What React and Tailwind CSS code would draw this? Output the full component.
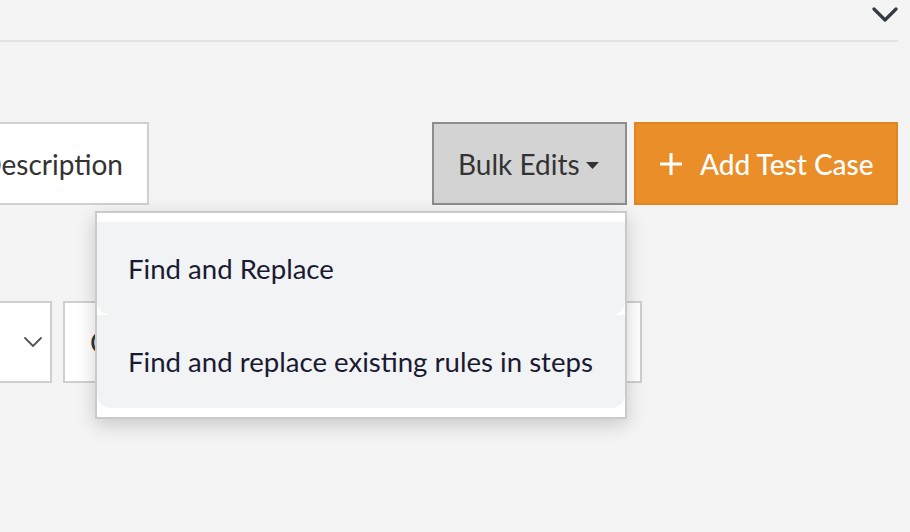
import React from "react";

export default function App() {
  return (
    <div className="relative w-[910px] h-[532px] overflow-hidden bg-[#f4f4f4] font-['Lato','Noto_Sans',sans-serif]">
      {/* top bar */}
      <div className="h-[42px] mr-[12px] border-b-2 border-[#e3e3e3] flex justify-end items-start pt-[7px]">
        <svg width="26" height="16" viewBox="0 0 26 16">
          <path d="M2 2 L13 13 L24 2" fill="none" stroke="#343b40" strokeWidth="3.2" strokeLinecap="round" strokeLinejoin="round" />
        </svg>
      </div>

      {/* action row */}
      <div className="mt-[80px] flex items-center mr-[12px] h-[83px]">
        <div className="-ml-[51px] w-[200px] h-[83px] bg-white border-2 border-[#d0d0d0] flex items-center justify-end pr-[24px] text-[28px] text-[#333] whitespace-nowrap overflow-hidden">
          Description
        </div>
        <div className="flex-1" />
        <button className="w-[195px] h-[83px] bg-[#d3d3d3] border-2 border-[#8d8d8d] flex items-center pl-[24px] text-[28px] text-[#333] whitespace-nowrap">
          Bulk Edits
          <svg width="13" height="7" viewBox="0 0 13 7" className="ml-[6px] mt-[4px]">
            <path d="M0 0 L13 0 L6.5 7 Z" fill="#333" />
          </svg>
        </button>
        <button className="ml-[7px] w-[264px] h-[83px] bg-[#e98e28] border-2 border-[#e0861c] flex items-center pl-[24px] text-[28px] text-white font-medium whitespace-nowrap">
          <svg width="22" height="22" viewBox="0 0 22 22" className="mr-[18px]">
            <path d="M11 0 V22 M0 11 H22" stroke="white" strokeWidth="3" />
          </svg>
          Add Test Case
        </button>
      </div>

      {/* filter row */}
      <div className="mt-[96px] flex items-center h-[82px]">
        <div className="-ml-[40px] w-[92px] h-[82px] bg-white border-2 border-[#cfcfcf] flex items-center justify-end pr-[8px]">
          <svg width="18" height="10" viewBox="0 0 18 10">
            <path d="M1 1 L9 9 L17 1" fill="none" stroke="#555" strokeWidth="1.8" strokeLinecap="round" strokeLinejoin="round" />
          </svg>
        </div>
        <div className="ml-[11px] w-[579px] h-[82px] bg-white border-2 border-[#cfcfcf] flex items-center pl-[25px] text-[28px] text-[#333]">
          Contains
        </div>
      </div>

      {/* dropdown menu */}
      <div className="absolute left-[95px] top-[211px] w-[532px] h-[208px] bg-white border-2 border-[#cacaca] py-[9px] shadow-[0_6px_18px_rgba(0,0,0,0.18)]">
        <div className="h-[93px] bg-[#f2f3f5] rounded-b-[14px] flex items-center pl-[31px] text-[27.6px] text-[#1a1a33] whitespace-nowrap">
          Find and Replace
        </div>
        <div className="h-[93px] bg-[#f2f3f5] rounded-b-[14px] flex items-center pl-[31px] text-[27.6px] text-[#1a1a33] whitespace-nowrap">
          Find and replace existing rules in steps
        </div>
      </div>
    </div>
  );
}
